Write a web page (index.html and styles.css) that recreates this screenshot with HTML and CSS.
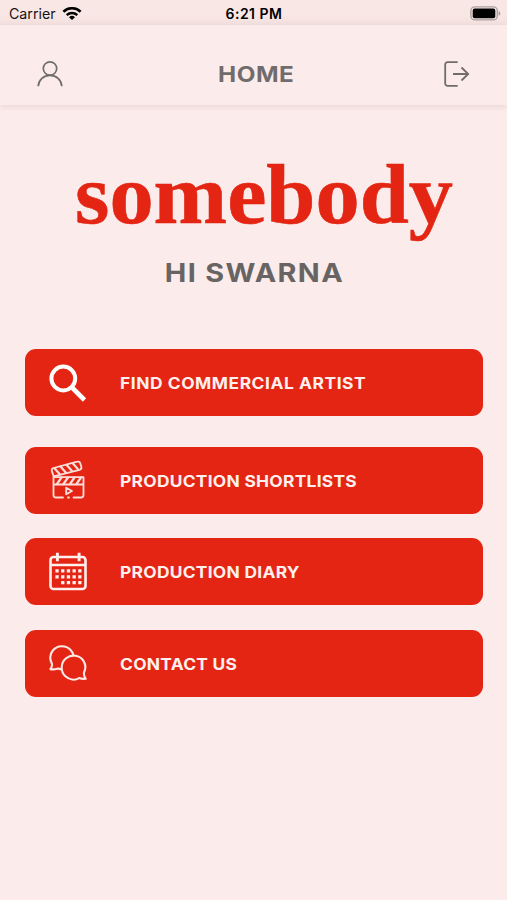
FILE: index.html
```
<!DOCTYPE html>
<html lang="en">
<head>
  <meta charset="UTF-8">
  <meta name="viewport" content="width=device-width, initial-scale=1.0">
  <title>Somebody - Home</title>
  <link rel="stylesheet" href="styles.css">
</head>
<body>
  <div class="status-bar">
    <div class="carrier">
      <span>Carrier</span>
      <svg width="20" height="14" viewBox="0 0 20 14" fill="none" stroke="#000" stroke-width="2.6">
        <path d="M1.4 4.7a12.5 12.5 0 0 1 17.2 0"/>
        <path d="M4.7 8.1a7.8 7.8 0 0 1 10.6 0"/>
        <path d="M10 13.1L7 10.3a4.3 4.3 0 0 1 6 0z" fill="#000" stroke="none"/>
      </svg>
    </div>
    <span class="time">6:21 PM</span>
    <svg class="battery" width="31" height="15" viewBox="0 0 31 15">
      <rect x="0.9" y="0.9" width="26.4" height="13" rx="4" fill="none" stroke="#aaa0a0" stroke-width="1.4"/>
      <rect x="2.7" y="2.6" width="22.6" height="9.6" rx="2" fill="#000"/>
      <path d="M28.6 5v4.8c2.4-.7 2.4-4.1 0-4.8z" fill="#aaa0a0"/>
    </svg>
  </div>

  <header class="navbar">
    <a href="#profile" aria-label="Profile">
      <svg width="28" height="28" viewBox="0 0 28 28" fill="none" stroke="#716b6b" stroke-width="1.7">
        <circle cx="14" cy="8.5" r="6.7"/>
        <path d="M2.2 26.3c.5-6.6 5.4-11 11.8-11s11.3 4.4 11.8 11"/>
      </svg>
    </a>
    <h1 class="title">HOME</h1>
    <a href="#logout" aria-label="Log out">
      <svg width="28" height="28" viewBox="0 0 28 28" fill="none" stroke="#716b6b" stroke-width="1.8">
        <path d="M14.7 2.2H4.5a2.3 2.3 0 0 0-2.3 2.3v19a2.3 2.3 0 0 0 2.3 2.3h10.2"/>
        <path d="M10 14h15.5M18.5 7.5l6.7 6.5-6.7 6.5"/>
      </svg>
    </a>
  </header>

  <main>
    <svg class="logo" width="400" height="106" viewBox="0 0 400 106">
      <text x="15" y="78.5" textLength="378" lengthAdjust="spacingAndGlyphs">somebody</text>
    </svg>
    <h2 class="greeting">HI SWARNA</h2>

    <nav class="menu">
      <a class="menu-item first" href="#artists">
        <svg width="40" height="40" viewBox="0 0 40 40" fill="none" stroke="#fff">
          <circle cx="15.3" cy="15.5" r="11.9" stroke-width="4"/>
          <path d="M24.5 25l12 12" stroke-width="4.6"/>
        </svg>
        <span class="label">FIND COMMERCIAL ARTIST</span>
      </a>
      <a class="menu-item" href="#shortlists">
        <svg width="40" height="40" viewBox="0 0 40 40" fill="none" stroke="#fcdeda" stroke-width="1.8" stroke-linejoin="round" stroke-linecap="round">
          <path d="M5.7 16.4L3.9 11.1a2.5 2.5 0 0 1 1.7-3.100L29.2 1.700a2.500 2.500 0 0 1 3.100 1.700l1 3.300a2.500 2.500 0 0 1-1.700 3.100z"/>
          <path d="M6.500 8.200l5.500 6.200M12.500 6.500l5.500 6.200M18.500 4.800l5.500 6.200M24.500 3.100l5.500 6.200" stroke-width="2.200"/>
          <path d="M15 37.500H8A2.500 2.500 0 0 1 5.500 35V17.100h30V35a2.500 2.500 0 0 1-2.500 2.500h-7.500M20 37.500h1M5.500 24.500h30"/>
          <path d="M13.500 17.500L9 24M20 17.500L15.500 24M26.500 17.500L22 24M33 17.500L28.500 24" stroke-width="2.200"/>
          <path d="M18.200 27.700v6.600l5.800-3.300z"/>
        </svg>
        <span class="label">PRODUCTION SHORTLISTS</span>
      </a>
      <a class="menu-item" href="#diary">
        <svg width="40" height="40" viewBox="0 0 40 40" fill="none" stroke="#ffefed">
          <rect x="2.5" y="5" width="35" height="32" rx="3" stroke-width="2.6"/>
          <path d="M2.5 12.9h35" stroke-width="2.5"/>
          <path d="M9.4 .8v8.500M31.100 .8v8.500" stroke-width="2.9"/>
          <path d="M7.4 18.900H34M7.400 24.900H34M13.100 30.700H34" stroke-width="3.3" stroke-dasharray="3.3 2.4"/>
        </svg>
        <span class="label">PRODUCTION DIARY</span>
      </a>
      <a class="menu-item" href="#contact">
        <svg width="40" height="40" viewBox="0 -1.3 40 40" fill="none" stroke="#ffe9e6" stroke-width="2.1" stroke-linejoin="round">
          <path d="M13.8 25c-1.300 0-2.600-.3-3.800-.8-2.600.9-5.400 1.100-7.600.7 1.200-1.500 1.800-3.300 1.600-5.200C1.600 15 1.800 9.800 5 6c4.400-5.300 12.700-5.500 17.400-.5 1.900 2 2.900 3.900 3.200 6"/>
          <path d="M36 28.200c1.800-3.600 1.700-8-.4-11.400C32 10.800 23.600 9.500 18.100 14c-5.600 4.600-5.900 13.100-.7 18 4 3.700 9.500 4.200 13.700 1.800 2.100.8 4.200 1 6.600.7-1.300-1.800-2-4.100-1.700-6.300z"/>
        </svg>
        <span class="label">CONTACT US</span>
      </a>
    </nav>
  </main>
</body>
</html>
```
FILE: styles.css
```
* {
  margin: 0;
  padding: 0;
  box-sizing: border-box;
}

body {
  min-height: 900px;
  font-family: Inter, "Liberation Sans", sans-serif;
  background-color: #fbeceb;
}

svg {
  display: block;
}

a {
  color: inherit;
  text-decoration: none;
}

/* Phone status bar */
.status-bar {
  display: grid;
  grid-template-columns: 1fr auto 1fr;
  align-items: center;
  height: 25px;
  padding: 2px 6px 0 9px;
  background: linear-gradient(#f9e7e5 60%, #f2e0df);
  color: #151313;
  font-size: 14.2px;
}

.carrier {
  display: flex;
  align-items: center;
  gap: 6px;
}

.time {
  margin-right: 2px;
  color: #000;
  font-size: 14px;
  font-weight: 600;
  letter-spacing: 0.5px;
}

.battery {
  justify-self: end;
}

/* Top navigation */
.navbar {
  display: flex;
  align-items: center;
  justify-content: space-between;
  height: 80px;
  padding: 18px 36px 0;
  background-color: #fbeceb;
  box-shadow: 0 2px 6px rgba(120, 70, 70, 0.13);
}

/* Wide bold headings */
.title,
.greeting,
.label {
  white-space: nowrap;
  font-weight: 700;
  transform: scaleX(1.13);
}

.title {
  padding-left: 5px;
  color: #716b6b;
  font-size: 21.5px;
  letter-spacing: 0.5px;
}

/* Logo and greeting */
main {
  padding-top: 39px;
}

.logo {
  margin-left: 60px;
}

.logo text {
  fill: #e42513;
  stroke: #e42513;
  stroke-width: 0.6px;
  font-family: "Liberation Serif", serif;
  font-size: 85px;
  font-weight: 700;
}

.greeting {
  width: fit-content;
  margin: 0 auto;
  padding-left: 1px;
  color: #696464;
  font-size: 25.5px;
  line-height: 46px;
  letter-spacing: 1.2px;
}

/* Main menu */
.menu {
  display: flex;
  flex-direction: column;
  gap: 24.5px;
  padding: 53px 24.5px 0 25px;
}

.menu-item {
  display: flex;
  align-items: center;
  gap: 32px;
  height: 67px;
  padding: 0 23px;
  border-radius: 11px;
  background-color: #e42513;
}

.menu-item.first {
  margin-bottom: 6px;
}

.label {
  padding-top: 2px;
  color: #fff0ed;
  font-size: 15.8px;
  letter-spacing: 0.25px;
  transform: scaleX(1.1);
  transform-origin: left;
}

.first .label {
  letter-spacing: 0.5px;
}
```
